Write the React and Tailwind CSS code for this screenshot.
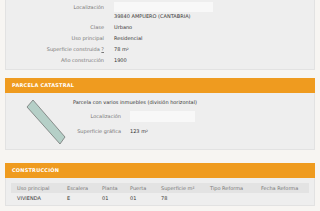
import React from "react";

const font = { fontFamily: '"DejaVu Sans", Verdana, sans-serif' };

function Row({ label, children }) {
    return (
        <div className="flex items-center h-[11px]">
            <span className="w-[108px] pr-[10px] text-right text-[#777]">{label}</span>
            <span className="text-[#333]">{children}</span>
        </div>
    );
}

function Header({ title }) {
    return (
        <div className="h-[15px] bg-[#ef9b1f] flex items-center pl-[7px] text-white font-bold text-[5px] tracking-[0.2px]">
            {title}
        </div>
    );
}

export default function App() {
    return (
        <div className="w-[320px] h-[211px] overflow-hidden bg-[#f7f5f2] px-[5px] text-[5px] leading-none" style={font}>
            <div className="h-[70px] bg-[#eeeeee] border border-[#e2e2e2] border-t-0 pt-[2px]">
                <div className="flex">
                    <span className="w-[108px] pr-[10px] text-right text-[#777] pt-[3px]">Localización</span>
                    <div className="flex flex-col">
                        <div className="w-[99px] h-[10px] bg-[#f8f8f8]"></div>
                        <span className="text-[#333] pt-[2px]">39840 AMPUERO (CANTABRIA)</span>
                    </div>
                </div>
                <div className="mt-[3px]">
                    <Row label="Clase">Urbano</Row>
                    <Row label="Uso principal">Residencial</Row>
                    <Row label={<>Superficie construida <span className="underline">?</span></>}>78 m<sup className="text-[3px]">2</sup></Row>
                    <Row label="Año construcción">1900</Row>
                </div>
            </div>

            <div className="mt-[8px]">
                <Header title="PARCELA CATASTRAL" />
                <div className="h-[57px] bg-[#eeeeee] border border-[#e2e2e2] border-t-0 flex">
                    <div className="w-[67px] pl-[20px] pt-[6px]">
                        <svg width="40" height="46" viewBox="0 0 40 46">
                            <polygon points="7,1 1,8 34,45 39,38" fill="#b5cfc7" stroke="#555" strokeWidth="0.6" />
                        </svg>
                    </div>
                    <div className="pt-[7px]">
                        <div className="text-[#333]">Parcela con varios inmuebles (división horizontal)</div>
                        <div className="flex items-center mt-[6px]">
                            <span className="w-[57px] pr-[9px] text-right text-[#777]">Localización</span>
                            <div className="w-[65px] h-[11px] bg-[#f8f8f8]"></div>
                        </div>
                        <div className="flex items-center mt-[7px]">
                            <span className="w-[57px] pr-[9px] text-right text-[#777]">Superficie gráfica</span>
                            <span className="text-[#333]">123 m<sup className="text-[3px]">2</sup></span>
                        </div>
                    </div>
                </div>
            </div>

            <div className="mt-[13px]">
                <Header title="CONSTRUCCIÓN" />
                <div className="h-[28px] bg-[#eeeeee] border border-[#e2e2e2] border-t-0 px-[5px] pt-[5px]">
                    <div className="grid grid-cols-[50px_35px_28px_31px_49px_51px_1fr] bg-[#e3e3e3] h-[10px] items-center pl-[6px] text-[#777]">
                        <span>Uso principal</span>
                        <span>Escalera</span>
                        <span>Planta</span>
                        <span>Puerta</span>
                        <span>Superficie m²</span>
                        <span>Tipo Reforma</span>
                        <span>Fecha Reforma</span>
                    </div>
                    <div className="grid grid-cols-[50px_35px_28px_31px_49px_51px_1fr] h-[10px] items-center pl-[6px] text-[#333]">
                        <span>VIVIENDA</span>
                        <span>E</span>
                        <span>01</span>
                        <span>01</span>
                        <span>78</span>
                        <span></span>
                        <span></span>
                    </div>
                </div>
            </div>
        </div>
    );
}
